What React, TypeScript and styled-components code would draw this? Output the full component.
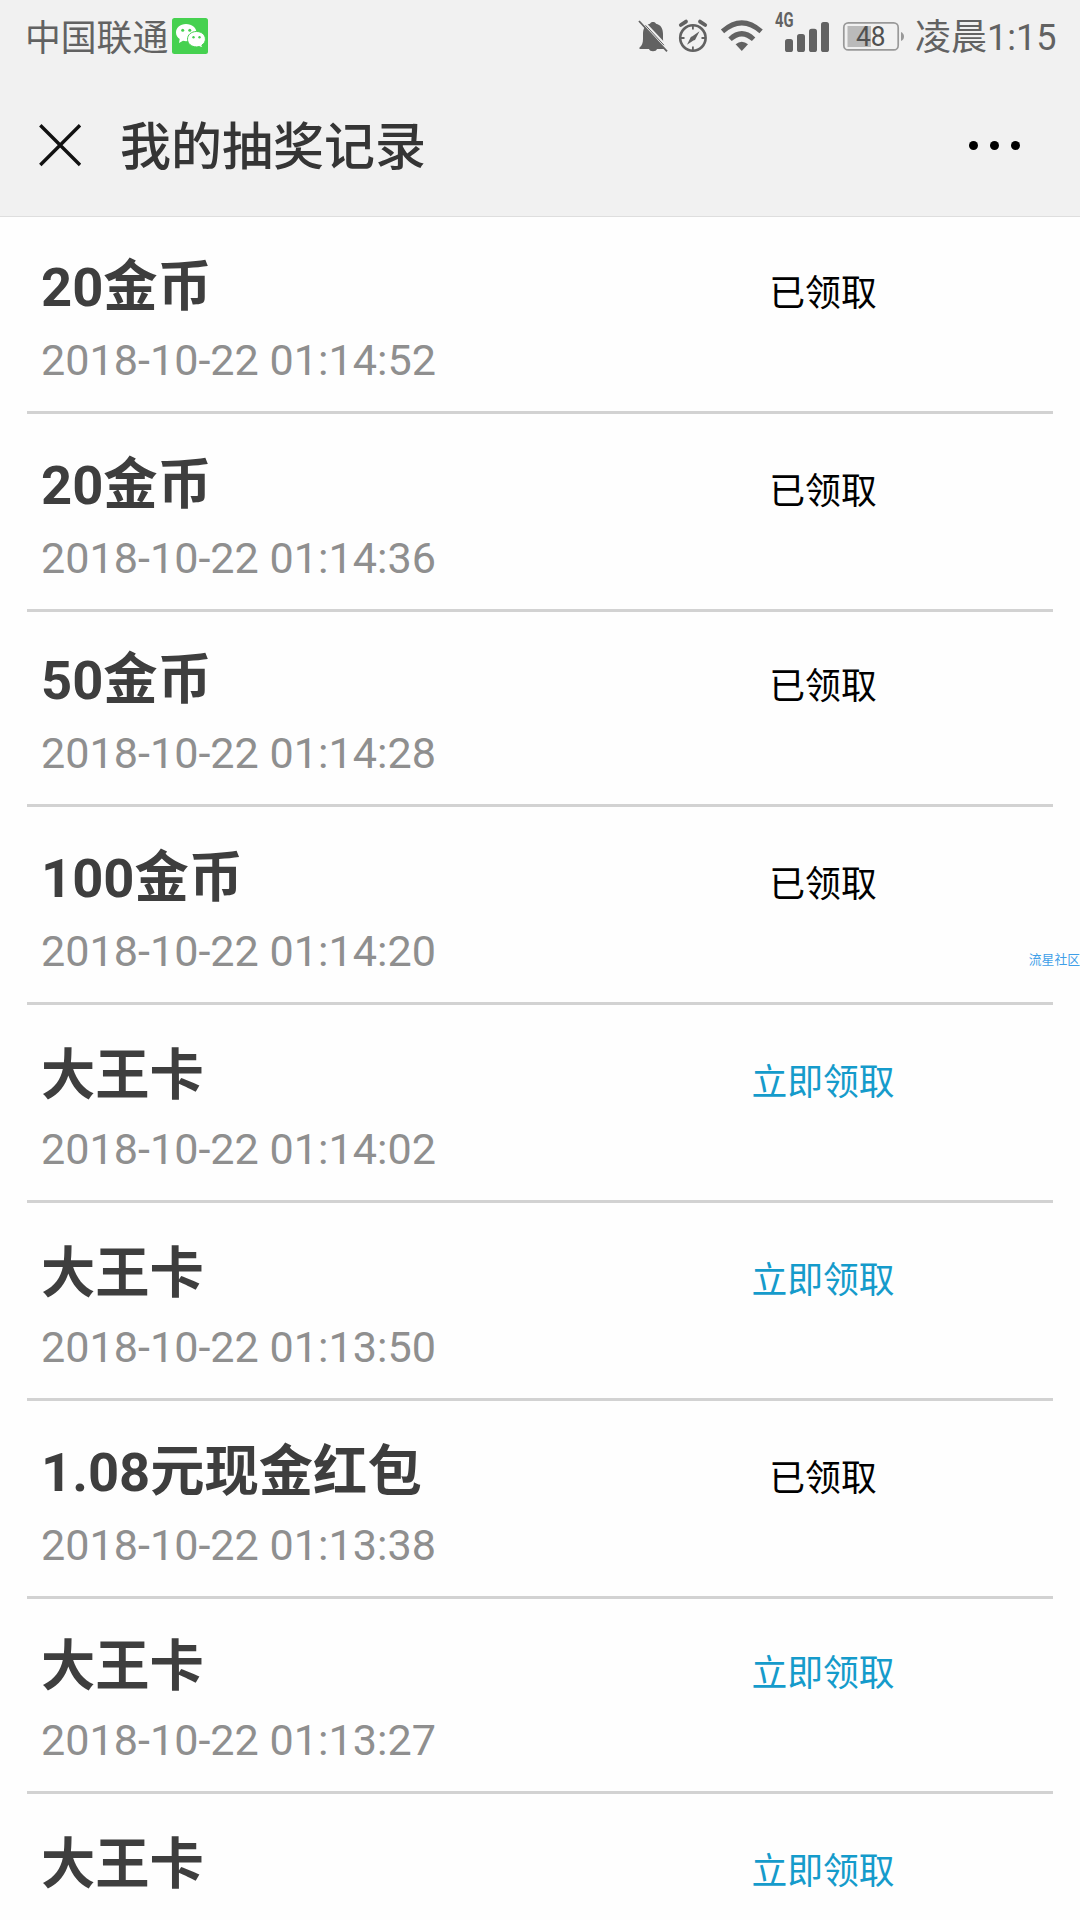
import React from 'react';
import styled, { createGlobalStyle } from 'styled-components';

const SANS = `Roboto, "Noto Sans CJK SC", sans-serif`;
const INK = '#626262';

const GlobalStyle = createGlobalStyle`
  * { box-sizing: border-box; }
  body { margin: 0; background: #fefefe; }
`;

const Screen = styled.div`
  position: relative;
  width: 1080px;
  height: 1920px;
  overflow: hidden;
  background: #fefefe;
  font-family: ${SANS};
`;

const TopArea = styled.header`
  height: 217px;
  background: #f1f1f1;
  border-bottom: 1px solid #dedede;
`;

const StatusBar = styled.div`
  display: flex;
  height: 73px;
  align-items: flex-start;
`;

const Carrier = styled.div`
  display: flex;
  padding: 15px 0 0 25px;
  font-size: 35.8px;
  line-height: 49px;
  color: ${INK};
`;

const Indicators = styled.div`
  display: flex;
  width: 442px;
  margin-left: auto;
  gap: 10px;
`;

const Glyph = styled.svg<{ $left?: number; $top?: number }>`
  display: block;
  flex: none;
  margin-left: ${(p) => p.$left ?? 0}px;
  margin-top: ${(p) => p.$top ?? 0}px;
`;

const Clock = styled.time`
  padding-top: 14px;
  font-size: 36px;
  line-height: 49px;
  color: ${INK};
  white-space: nowrap;
`;

const NavBar = styled.div`
  display: flex;
  height: 143px;
  align-items: center;
  padding: 0 58px 0 38px;
`;

const NavTitle = styled.h1`
  flex: 1;
  margin: 0 0 0 38px;
  padding-top: 7px;
  font-size: 51px;
  line-height: 70px;
  font-weight: 500;
  color: #353535;
`;

const RecordList = styled.ul`
  list-style: none;
  margin: -1px 0 0;
  padding: 0 27px;
`;

const Record = styled.li<{ $tight?: boolean }>`
  display: flex;
  justify-content: space-between;
  height: ${(p) => (p.$tight ? 195 : 198)}px;
  padding-top: ${(p) => (p.$tight ? 36 : 39)}px;
  border-bottom: 3px solid #d2d2d2;
`;

const Prize = styled.div`
  padding: 1px 0 0 14px;
`;

const PrizeName = styled.div`
  font-size: 54.3px;
  line-height: 64px;
  font-weight: 700;
  color: #3e3e3e;
`;

const PrizeLabel = styled.span`
  line-height: 0;
  vertical-align: 1px;
`;

const PrizeTime = styled.div`
  margin-top: 15px;
  font-size: 43.15px;
  line-height: 52px;
  color: #8f8f8f;
`;

const Claim = styled.div<{ $open: boolean }>`
  width: 460px;
  padding-top: 17px;
  text-align: center;
  font-size: 35.8px;
  line-height: 44px;
  color: ${(p) => (p.$open ? '#159bcb' : '#000')};
`;

const Watermark = styled.div`
  position: absolute;
  top: 951px;
  right: 0;
  font-size: 12.8px;
  line-height: 18px;
  color: #3f9fe8;
  white-space: nowrap;
`;

interface Entry {
  amount?: string;
  label: string;
  time?: string;
  claimed: boolean;
  tight?: boolean;
}

const entries: Entry[] = [
  { amount: '20', label: '金币', time: '2018-10-22 01:14:52', claimed: true },
  { amount: '20', label: '金币', time: '2018-10-22 01:14:36', claimed: true },
  { amount: '50', label: '金币', time: '2018-10-22 01:14:28', claimed: true, tight: true },
  { amount: '100', label: '金币', time: '2018-10-22 01:14:20', claimed: true },
  { label: '大王卡', time: '2018-10-22 01:14:02', claimed: false },
  { label: '大王卡', time: '2018-10-22 01:13:50', claimed: false },
  { amount: '1.08', label: '元现金红包', time: '2018-10-22 01:13:38', claimed: true },
  { label: '大王卡', time: '2018-10-22 01:13:27', claimed: false, tight: true },
  { label: '大王卡', claimed: false },
];

const WeChatIcon = () => (
  <Glyph $left={4} $top={3} width="36" height="36" viewBox="0 0 36 36">
    <rect width="36" height="36" rx="2.5" fill="#46d150" />
    <path d="M14 6C8 6 4 9.8 4 14.5c0 2.700 1.400 5 3.700 6.500L7 25l4-2.200c1 .3 2 .4 3 .4 6 0 10.500-3.900 10.500-8.600S20 6 14 6z" fill="#fff" />
    <path d="M24.500 13.500c-5.200 0-9 3.300-9 7.700s3.800 7.700 9 7.700c1 0 1.900-.1 2.700-.4L30.500 30l-.6-3c2.200-1.400 3.500-3.500 3.500-5.800 0-4.400-3.700-7.700-8.900-7.700z" fill="#fff" stroke="#46d150" strokeWidth="1" />
    <g fill="#46d150">
      <circle cx="10.700" cy="12.300" r="1.500" />
      <circle cx="17.800" cy="12.300" r="1.500" />
      <circle cx="21.500" cy="19.300" r="1.200" />
      <circle cx="27.500" cy="19.300" r="1.200" />
    </g>
  </Glyph>
);

const MutedBellIcon = () => (
  <Glyph width="30" height="60" viewBox="638 0 30 60">
    <path d="M639.500 49v-1.500c2.500-2 3.500-4.500 3.500-8.500v-5c0-6 2.500-9.300 7-10.300 .5-1.200 1.500-1.700 3-1.700s2.500 .5 3 1.700c4.500 1 7 4.300 7 10.300v5c0 4 1 6.500 3.500 8.500V49H657c-.5 1.500-2 2.200-4 2.200s-3.500-.7-4-2.200z" fill={INK} />
    <path d="M640.500 20L668.500 50" stroke="#f1f1f1" strokeWidth="4.600" />
    <path d="M639 21L667 51.300" stroke={INK} strokeWidth="1.800" />
    <path d="M645.500 25.300L664 45.200" stroke={INK} strokeWidth="1" />
  </Glyph>
);

const AlarmIcon = () => (
  <Glyph width="31" height="60" viewBox="678 0 31 60">
    <g fill="none" stroke={INK}>
      <circle cx="692.900" cy="38" r="12.700" strokeWidth="2.600" />
      <path d="M680.800 25L686 21.600M705.200 25L700 21.600" strokeWidth="3.800" strokeLinecap="round" />
      <path d="M692.900 26v3.500M692.900 46.500V50M681 38h3.500M701.500 38H705" strokeWidth="1.800" />
    </g>
    <path d="M699.500 31.200L695 40l-1.600 .6L687 44.800 690.800 37l1.600-.7z" fill={INK} />
  </Glyph>
);

const WifiIcon = () => (
  <Glyph $left={1} width="44" height="60" viewBox="720 0 44 60">
    <g fill="none" stroke={INK} strokeWidth="5">
      <path d="M722.500 31.300Q741.800 14.300 761.100 31.300" />
      <path d="M730 39.300Q741.800 28.200 753.600 39.300" />
    </g>
    <path d="M735.600 44.300q6.200-5 12.400 0L741.800 51z" fill={INK} />
  </Glyph>
);

const SignalIcon = () => (
  <Glyph width="56" height="60" viewBox="774 0 56 60">
    <text x="775" y="26.700" fontFamily="Roboto, sans-serif" fontWeight="700" fontSize="19.800" textLength="18.500" lengthAdjust="spacingAndGlyphs" fill={INK}>4G</text>
    <g fill={INK}>
      <rect x="785" y="39" width="8" height="13" rx="2.600" />
      <rect x="797" y="34" width="8" height="18" rx="2.600" />
      <rect x="809" y="28.700" width="8" height="23.300" rx="2.600" />
      <rect x="821" y="22" width="8" height="30" rx="2.600" />
    </g>
  </Glyph>
);

const BatteryIcon = () => (
  <Glyph $left={2} width="63" height="60" viewBox="842 0 63 60">
    <rect x="843.800" y="22.900" width="54.400" height="27" rx="4.500" fill="none" stroke="#999" strokeWidth="1.700" />
    <rect x="847.500" y="26" width="23.500" height="21" fill="#bababa" />
    <path d="M901 32q3 1.500 3 4.500t-3 4.500z" fill="#999" />
    <text x="856" y="46" fontFamily="Roboto, sans-serif" fontSize="27" textLength="29.500" lengthAdjust="spacingAndGlyphs" fill="#505050">48</text>
  </Glyph>
);

const CloseIcon = () => (
  <Glyph width="44" height="44" viewBox="0 0 44 44">
    <path d="M2.300 2.300L42 42M42 2.300L2.300 42" stroke="#111" strokeWidth="3.400" />
  </Glyph>
);

const MoreIcon = () => (
  <Glyph width="54" height="12" viewBox="0 0 54 12">
    <circle cx="5.500" cy="6.500" r="4.500" />
    <circle cx="26.500" cy="6.500" r="4.500" />
    <circle cx="47.500" cy="6.500" r="4.500" />
  </Glyph>
);

export default function App() {
  return (
    <Screen>
      <GlobalStyle />
      <TopArea>
        <StatusBar>
          <Carrier>
            中国联通
            <WeChatIcon />
          </Carrier>
          <Indicators>
            <MutedBellIcon />
            <AlarmIcon />
            <WifiIcon />
            <SignalIcon />
            <BatteryIcon />
            <Clock>凌晨1:15</Clock>
          </Indicators>
        </StatusBar>
        <NavBar>
          <CloseIcon />
          <NavTitle>我的抽奖记录</NavTitle>
          <MoreIcon />
        </NavBar>
      </TopArea>
      <RecordList>
        {entries.map((entry, i) => (
          <Record key={i} $tight={entry.tight}>
            <Prize>
              <PrizeName>
                {entry.amount}
                <PrizeLabel>{entry.label}</PrizeLabel>
              </PrizeName>
              {entry.time && <PrizeTime>{entry.time}</PrizeTime>}
            </Prize>
            <Claim $open={!entry.claimed}>{entry.claimed ? '已领取' : '立即领取'}</Claim>
          </Record>
        ))}
      </RecordList>
      <Watermark>流星社区</Watermark>
    </Screen>
  );
}
